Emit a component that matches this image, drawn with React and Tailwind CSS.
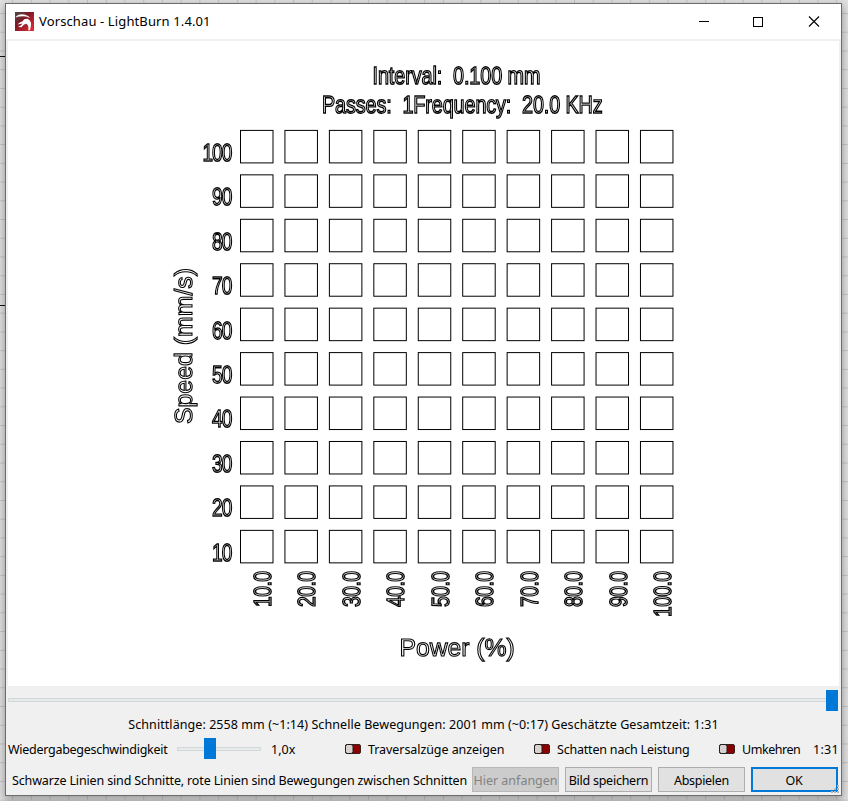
import React from "react";

const LEVELS = [10, 20, 30, 40, 50, 60, 70, 80, 90, 100];
const PITCH = 44.44;

function Backdrop() {
  return (
    <svg className="absolute inset-0 h-full w-full" aria-hidden="true">
      <defs>
        <pattern id="bed" x="12.1" y="13" width="18.73" height="18.73" patternUnits="userSpaceOnUse">
          <rect width="18.73" height="18.73" fill="#e1e1e1" />
          <path d="M0.5 0V18.73M0 0.5H18.73" stroke="#c6c6c6" />
        </pattern>
      </defs>
      <rect width="848" height="801" fill="url(#bed)" />
      <path d="M0 56.5H6M0 305.5H6" stroke="#111" />
    </svg>
  );
}

function Logo() {
  return (
    <svg className="h-[19px] w-[19px]" viewBox="0 0 19 19">
      <defs>
        <linearGradient id="logo" x1="0" y1="0" x2="1" y2="1">
          <stop offset="0" stopColor="#4b4a4a" />
          <stop offset="0.4" stopColor="#7d1826" />
          <stop offset="1" stopColor="#f02b35" />
        </linearGradient>
      </defs>
      <rect width="19" height="19" fill="url(#logo)" />
      <path d="M0.8 5C4 1.8 10 1.6 14.4 5.4C10.5 3.7 5 3.8 0.8 5Z" fill="#fff" stroke="#fff" strokeWidth="0.5" />
      <path
        d="M2.4 12.6L4.8 10.4L7.6 9.2L9.2 7.2L12.2 6.8C15.4 7.8 16.8 11 15.8 14.6L15 18.2H13.2C14 14.8 13 12.6 11 11.8L8.8 12.8L6.4 15.2L3 15L6 13.2L7.6 11.4L5 12Z"
        fill="#fff"
      />
    </svg>
  );
}

function Outline({ x, y, width, rotate, squeeze = 1, anchor = "start", children }) {
  return (
    <text
      x="0"
      y="0"
      textLength={width / squeeze}
      lengthAdjust="spacing"
      textAnchor={anchor}
      textRendering="geometricPrecision"
      transform={`translate(${x} ${y}) rotate(${rotate ? -90 : 0}) scale(${squeeze} 1)`}
      className="whitespace-pre"
    >
      {children}
    </text>
  );
}

function Preview() {
  return (
    <svg className="mx-auto block h-[645px] w-[831px] bg-white" viewBox="8 41 831 645">
      <g fill="none" stroke="#000" strokeWidth="1">
        {LEVELS.map((row, r) =>
          LEVELS.map((col, c) => (
            <rect key={`${row}-${col}`} x={240.5 + c * PITCH} y={130.4 + r * PITCH} width="32.5" height="32.5" />
          ))
        )}
      </g>
      <g
        fill="none"
        stroke="#000"
        strokeWidth="1.4"
        fontSize="24.8"
        fontFamily="'Liberation Sans', Arial, sans-serif"
        className="opacity-[0.99]"
      >
        <Outline x={372.5} y={84.4} width={168} squeeze={0.8}>{"Interval:\u00a0 0.100 mm"}</Outline>
        <Outline x={322} y={112.5} width={280.7} squeeze={0.8}>{"Passes:\u00a0 1Frequency:\u00a0 20.0 KHz"}</Outline>
        {LEVELS.map((v, i) => (
          <Outline key={v} x={232.4} y={560.8 - i * PITCH} width={v === 100 ? 30 : 20.4} squeeze={0.77} anchor="end">
            {v}
          </Outline>
        ))}
        {LEVELS.map((v, i) => (
          <Outline key={v} x={271 + i * PITCH} y={570.9} width={v === 100 ? 46 : 36} rotate squeeze={0.78} anchor="end">
            {v + ".0"}
          </Outline>
        ))}
        <g strokeWidth="1.1">
          <Outline x={192.3} y={424} width={156} rotate>Speed (mm/s)</Outline>
          <Outline x={399.5} y={655.5} width={115.2}>Power (%)</Outline>
        </g>
      </g>
    </svg>
  );
}

function Toggle({ children, className, text }) {
  return (
    <label className={`flex items-center gap-[7px] ${className}`}>
      <svg className="h-[10px] w-4 shrink-0" viewBox="0 0 16 10">
        <rect x="0.5" y="0.5" width="15" height="9" rx="1.5" fill="#8b0000" stroke="#3a2020" />
        <rect x="0.5" y="0.5" width="7.5" height="9" rx="2" fill="#d9d0d0" stroke="#1c1c1c" />
      </svg>
      <span className={text}>{children}</span>
    </label>
  );
}

function Button({ className, children }) {
  return (
    <button className={`flex h-[25px] w-[87px] shrink-0 items-center justify-center pt-[3px] ${className}`}>{children}</button>
  );
}

export default function App() {
  return (
    <div className="relative h-[801px] w-[848px] overflow-hidden pl-[5px] pt-[3px] font-['Noto_Sans',sans-serif] text-[13px] leading-none text-black">
      <Backdrop />
      <div className="relative flex h-[793px] w-[837px] flex-col border border-[#6b6b6b] bg-[#f0f0f0] shadow-[0_3px_8px_1px_rgba(0,0,0,0.3)]">
        <header className="flex h-[35px] shrink-0 items-center bg-white pl-[9px]">
          <Logo />
          <h1 className="ml-[5px] tracking-[0.12px]">Vorschau - LightBurn 1.4.01</h1>
          <div className="ml-auto mr-[21px] flex items-center gap-[43px]">
            <svg className="h-3 w-3" viewBox="0 0 12 12"><path d="M2 5.5H12" stroke="#000" /></svg>
            <svg className="h-3 w-3" viewBox="0 0 12 12"><rect x="1.5" y="1.5" width="9" height="9" fill="none" stroke="#000" /></svg>
            <svg className="ml-px h-3 w-3" viewBox="0 0 12 12"><path d="M1 0.5L11 10.5M11 0.5L1 10.5" stroke="#000" strokeWidth="1.1" /></svg>
          </div>
        </header>
        <main className="pt-[2px]">
          <Preview />
        </main>
        <footer className="whitespace-nowrap text-[12.5px]">
          <div className="flex h-[28px] items-center pl-[2px] pr-[3px]">
            <div className="h-1 flex-1 border border-r-0 border-[#d3d8d8] bg-[#e6eaea]" />
            <div className="h-[21px] w-3 bg-[#0078d7]" />
          </div>
          <div className="mt-0.5 flex h-[18px] items-center justify-center">
            <span className="tracking-[0.07px]">Schnittlänge: 2558 mm (~1:14) Schnelle Bewegungen: 2001 mm (~0:17) Geschätzte Gesamtzeit: 1:31</span>
          </div>
          <div className="mt-1 flex h-[21px] items-center pl-[2px]">
            <span className="w-[169px] pt-1 tracking-[-0.28px]">Wiedergabegeschwindigkeit</span>
            <div className="flex w-[94px] items-center">
              <div className="h-1 w-[27px] border border-r-0 border-[#d3d8d8] bg-[#e6eaea]" />
              <div className="h-[21px] w-3 bg-[#0078d7]" />
              <div className="h-1 w-[45px] border border-l-0 border-[#d3d8d8] bg-[#e6eaea]" />
            </div>
            <span className="w-[74px] pt-1">1,0x</span>
            <Toggle className="w-[189px]" text="pt-1 tracking-[-0.07px]">Traversalzüge anzeigen</Toggle>
            <Toggle className="w-[185px]" text="pt-1 tracking-[-0.2px]">Schatten nach Leistung</Toggle>
            <Toggle className="w-[94px]" text="pt-1 tracking-[-0.45px]">Umkehren</Toggle>
            <span className="pt-1 tracking-[0.3px]">1:31</span>
          </div>
          <div className="relative mt-2 flex items-center gap-1.5 pl-[6px]">
            <span className="w-[454px] pt-1 tracking-[-0.145px]">Schwarze Linien sind Schnitte, rote Linien sind Bewegungen zwischen Schnitten</span>
            <Button className="border border-[#b8b8b8] bg-[#cccccc] text-[#838383]">Hier anfangen</Button>
            <Button className="border border-[#adadad] bg-[#e1e1e1] tracking-[-0.25px]">Bild speichern</Button>
            <Button className="border border-[#adadad] bg-[#e1e1e1] tracking-[-0.3px]">Abspielen</Button>
            <Button className="border-2 border-[#0078d7] bg-[#e1e1e1] pr-px tracking-[-0.3px]">OK</Button>
            <svg className="absolute right-[2px] bottom-[-1px] h-2 w-2" viewBox="0 0 8 8" fill="#b4b8bb">
              <path d="M6 0h2v2h-2zM3 3h2v2h-2zM6 3h2v2h-2zM0 6h2v2h-2zM3 6h2v2h-2zM6 6h2v2h-2z" />
            </svg>
          </div>
        </footer>
      </div>
    </div>
  );
}
